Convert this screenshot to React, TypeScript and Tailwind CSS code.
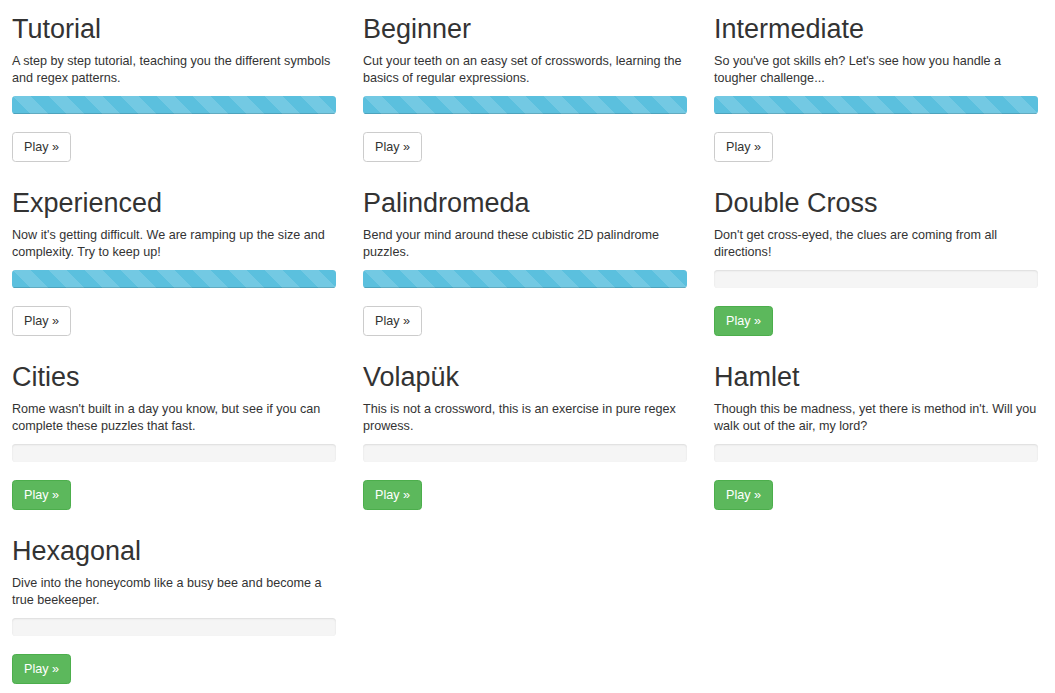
const levels = [
  { title: 'Tutorial', text: 'A step by step tutorial, teaching you the different symbols and regex patterns.', done: true },
  { title: 'Beginner', text: 'Cut your teeth on an easy set of crosswords, learning the basics of regular expressions.', done: true },
  { title: 'Intermediate', text: "So you've got skills eh? Let's see how you handle a tougher challenge...", done: true },
  { title: 'Experienced', text: "Now it's getting difficult. We are ramping up the size and complexity. Try to keep up!", done: true },
  { title: 'Palindromeda', text: 'Bend your mind around these cubistic 2D palindrome puzzles.', done: true },
  { title: 'Double Cross', text: "Don't get cross-eyed, the clues are coming from all directions!", done: false },
  { title: 'Cities', text: "Rome wasn't built in a day you know, but see if you can complete these puzzles that fast.", done: false },
  { title: 'Volapük', text: 'This is not a crossword, this is an exercise in pure regex prowess.', done: false },
  { title: 'Hamlet', text: "Though this be madness, yet there is method in't. Will you walk out of the air, my lord?", done: false },
  { title: 'Hexagonal', text: 'Dive into the honeycomb like a busy bee and become a true beekeeper.', done: false },
];

const App = () => {
  return (
    <div className="min-h-[693px] bg-white pl-[12px] pt-[14px] text-[#333]" style={{ fontFamily: '"Liberation Sans", Arial, sans-serif' }}>
      <div className="grid grid-cols-[324px_324px_324px] gap-x-[27px] gap-y-[26px]">
        {levels.map((level) => (
          <div key={level.title}>
            <h2 className="h-[30px] text-[27px] leading-[30px] font-normal">{level.title}</h2>
            <p className="mt-[9px] h-[34px] text-[12.6px] leading-[17px]">{level.text}</p>
            <div className="mt-[9px] h-[18px] overflow-hidden rounded-[3.6px] bg-[#f5f5f5] shadow-[inset_0_1px_2px_rgba(0,0,0,0.1)]">
              {level.done && (
                <div className="h-full w-full bg-[#5bc0de] bg-[linear-gradient(45deg,rgba(255,255,255,.15)_25%,transparent_25%,transparent_50%,rgba(255,255,255,.15)_50%,rgba(255,255,255,.15)_75%,transparent_75%,transparent)] bg-size-[36px_36px] shadow-[inset_0_-1px_0_rgba(0,0,0,0.15)]" />
              )}
            </div>
            <button
              className={`mt-[18px] h-[30px] rounded-[3.6px] border px-[11px] text-[12.6px] leading-[18px] ${
                level.done ? 'border-[#ccc] bg-white text-[#333]' : 'border-[#4cae4c] bg-[#5cb85c] text-white'
              }`}
            >
              Play »
            </button>
          </div>
        ))}
      </div>
    </div>
  );
};

export default App;
